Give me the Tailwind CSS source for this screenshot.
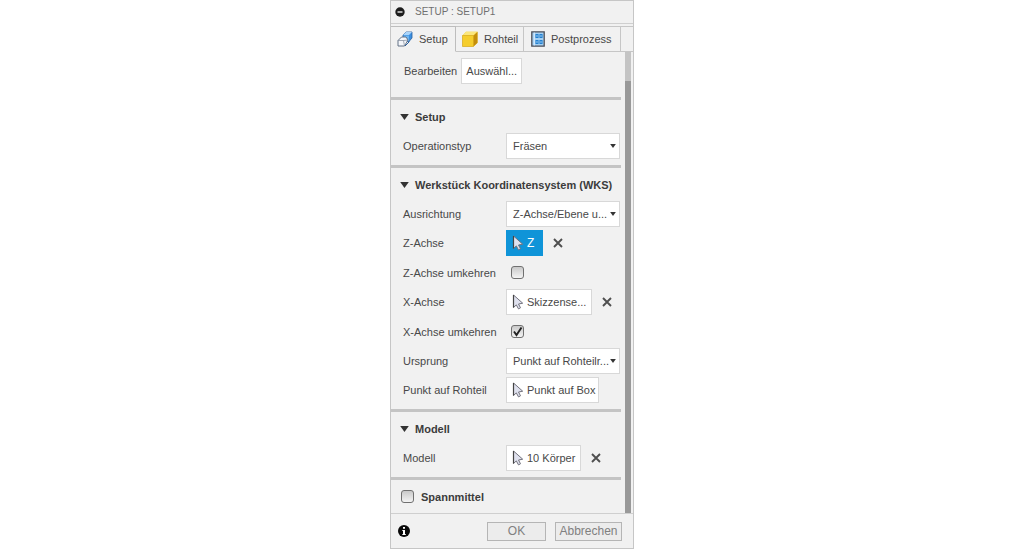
<!DOCTYPE html>
<html lang="de">
<head>
<meta charset="utf-8">
<meta name="viewport" content="width=device-width, initial-scale=1">
<title>Setup : Setup1</title>
<script src="https://cdn.jsdelivr.net/npm/@tailwindcss/browser@4"></script>
</head>
<body class="bg-white font-['Liberation_Sans',Arial,sans-serif] text-[11px] leading-4 text-[#484848]">
<svg class="hidden" aria-hidden="true">
  <symbol id="cursor" viewBox="0 0 12 16"><path d="M1.500 1v12.500l2.800-2.600 2.200 4 2-1.100-2-3.800 4.200-.8z" fill="#dfe1ee" stroke="#73737e" stroke-width="1"/><path d="M1.500 1v12.500" stroke="#444" stroke-width="1.200"/></symbol>
  <symbol id="close" viewBox="0 0 10 10"><path d="M1 1l8 8M9 1l-8 8" stroke="#4f4f4f" stroke-width="1.900" fill="none"/></symbol>
  <symbol id="down" viewBox="0 0 10 7"><path d="M0 0h10L5 7z" fill="#333"/></symbol>
</svg>
<main class="mx-auto flex min-h-screen w-full max-w-[244px] flex-col border border-[#c6c6c6] bg-[#f1f1f1]">
  <header class="flex h-[23px] items-center gap-2.5 border-b border-[#cfcfcf] pl-1">
    <svg class="size-[10px]" viewBox="0 0 10 10"><circle cx="5" cy="5" r="4.700" fill="#1d1d1d"/><path d="M2.500 5h5" stroke="#ddd" stroke-width="1.500"/></svg>
    <h1 class="text-[10px] text-[#707070]">SETUP : SETUP1</h1>
  </header>

  <nav class="flex h-7 items-stretch pt-0.5" role="tablist">
    <button role="tab" aria-selected="true" class="flex w-[65px] items-center gap-1.5 border-t border-r border-b border-[#bdbdbd] border-b-transparent pl-1.5">
      <svg class="size-4 shrink-0" viewBox="0 0 16 16"><path d="M6 4l3-3h6v6l-3 3.500H6z" fill="#3b8fe0" stroke="#2b5f9e" stroke-width=".8"/><path d="M6 4l3-3h6l-3 3z" fill="#a9d4fa"/><path d="M6.500 4.500H12V10H6.500z" fill="#6db5f2"/><path d="M1 9.500L4.500 6H9l2 3-3.500 6H1z" fill="#f4f6fa" stroke="#55657c" stroke-width=".9"/><path d="M1 9.500h5.500L11 9M6.500 9.500l1 5.500" stroke="#7d8796" stroke-width=".7" fill="none"/><path d="M8 15l4.500-4.500" stroke="#2b5f9e"/></svg>
      Setup
    </button>
    <button role="tab" aria-selected="false" class="flex w-[68px] items-center gap-1.5 border-t border-r border-b border-[#c6c6c6] pl-1.5">
      <svg class="size-4 shrink-0" viewBox="0 0 16 16"><path d="M.5 4.500L4 .8h11.500v11L11.500 15.500H.5z" fill="#f5cd2c"/><path d="M.5 4.500L4 .8h11.500l-4 3.700z" fill="#fbe67c"/><path d="M11.500 4.500l4-3.700v11l-4 3.700z" fill="#c48e0c"/><path d="M.5 4.500h11v11H.5z" fill="none" stroke="#d6a818" stroke-width=".7"/></svg>
      Rohteil
    </button>
    <button role="tab" aria-selected="false" class="flex w-[97px] items-center gap-1.5 border-t border-r border-b border-[#c6c6c6] pl-[7px]">
      <svg class="h-4 w-[14px] shrink-0" viewBox="0 0 14 16"><path d="M.8.8h12.400v14.400H.8z" fill="#a5d0f3" stroke="#4c4f58" stroke-width="1.300"/><path d="M3.300 1.500v13" stroke="#e7f4ff" stroke-width=".8"/><path d="M5 3.500h2v3H5zM9 3.500h2v3H9zM5 9.500h2v3H5zM9 9.500h2v3H9z" fill="none" stroke="#2480cf" stroke-width="1.100"/></svg>
      Postprozess
    </button>
    <span class="flex-1 border-t border-b border-[#c6c6c6]"></span>
  </nav>

  <div class="flex flex-1">
    <form id="setup" class="min-w-0 flex-1">
      <div class="flex h-[45px] items-start gap-1 pt-1.5 pl-[13px]">
        <label for="edit" class="leading-[26px]">Bearbeiten</label>
        <button id="edit" type="button" class="h-[26px] w-[61px] border border-[#d8d8d8] bg-white">Auswähl...</button>
      </div>

      <section class="border-t-3 border-[#c4c4c4] pb-1.5">
        <h2 class="flex h-[33px] items-center gap-1.5 pl-[9px] font-bold text-[#3c3c3c]"><svg class="h-1.5 w-[9px]"><use href="#down"/></svg>Setup</h2>
        <div class="flex h-[26px] items-center pl-3">
          <label for="op" class="w-[103px]">Operationstyp</label>
          <div class="relative w-[114px]"><select id="op" class="h-[26px] w-full appearance-none border border-[#d8d8d8] bg-white pl-1.5"><option>Fräsen</option></select><svg class="pointer-events-none absolute top-[11px] right-1 h-1 w-1.5"><use href="#down"/></svg></div>
        </div>
      </section>

      <section class="border-t-3 border-[#c4c4c4] pb-1.5">
        <h2 class="flex h-[33px] items-center gap-1.5 pl-[9px] font-bold whitespace-nowrap text-[#3c3c3c]"><svg class="h-1.5 w-[9px] shrink-0"><use href="#down"/></svg>Werkstück Koordinatensystem (WKS)</h2>
        <div class="flex flex-col gap-[3px] pl-3">
          <div class="flex h-[26px] items-center">
            <label for="orient" class="w-[103px]">Ausrichtung</label>
            <div class="relative w-[114px]"><select id="orient" class="h-[26px] w-full appearance-none border border-[#d8d8d8] bg-white pl-1.5"><option>Z-Achse/Ebene u...</option></select><svg class="pointer-events-none absolute top-[11px] right-1 h-1 w-1.5"><use href="#down"/></svg></div>
          </div>
          <div class="flex h-[26px] items-center">
            <label for="zaxis" class="w-[103px]">Z-Achse</label>
            <button id="zaxis" type="button" class="flex h-[26px] w-[37px] items-center gap-[3px] bg-[#0f94d8] pl-1.5 text-xs text-white"><svg class="h-4 w-3"><use href="#cursor"/></svg>Z</button>
            <button type="button" aria-label="Z-Achse löschen" class="ml-2.5"><svg class="size-[10px]"><use href="#close"/></svg></button>
          </div>
          <div class="flex h-[27px] items-center">
            <label for="zflip" class="w-[103px]">Z-Achse umkehren</label>
            <input id="zflip" type="checkbox" class="ml-[5px] size-[13px] appearance-none rounded-[3px] border border-[#707070] bg-linear-to-b from-[#c9c9c9] to-[#f4f4f4]">
          </div>
          <div class="flex h-[26px] items-center">
            <label for="xaxis" class="w-[103px]">X-Achse</label>
            <button id="xaxis" type="button" class="flex h-[26px] w-[86px] items-center gap-[3px] border border-[#d8d8d8] bg-white pl-[5px]"><svg class="h-4 w-3"><use href="#cursor"/></svg>Skizzense...</button>
            <button type="button" aria-label="X-Achse löschen" class="ml-2.5"><svg class="size-[10px]"><use href="#close"/></svg></button>
          </div>
          <div class="flex h-[27px] items-center">
            <label for="xflip" class="w-[103px]">X-Achse umkehren</label>
            <div class="relative ml-[5px] size-[13px]"><input id="xflip" type="checkbox" checked class="peer block size-[13px] appearance-none rounded-[3px] border border-[#707070] bg-linear-to-b from-[#c9c9c9] to-[#f4f4f4]"><svg class="pointer-events-none absolute inset-0 hidden size-[13px] peer-checked:block" viewBox="0 0 13 13"><path d="M3 6.500l2.500 3.500L10.500 2.500" fill="none" stroke="#222" stroke-width="1.900"/></svg></div>
          </div>
          <div class="flex h-[26px] items-center">
            <label for="origin" class="w-[103px]">Ursprung</label>
            <div class="relative w-[114px]"><select id="origin" class="h-[26px] w-full appearance-none border border-[#d8d8d8] bg-white pl-1.5"><option>Punkt auf Rohteilr...</option></select><svg class="pointer-events-none absolute top-[11px] right-1 h-1 w-1.5"><use href="#down"/></svg></div>
          </div>
          <div class="flex h-[26px] items-center">
            <label for="point" class="w-[103px]">Punkt auf Rohteil</label>
            <button id="point" type="button" class="flex h-[26px] w-[93px] items-center gap-[3px] border border-[#d8d8d8] bg-white pl-[5px]"><svg class="h-4 w-3"><use href="#cursor"/></svg>Punkt auf Box</button>
          </div>
        </div>
      </section>

      <section class="border-t-3 border-[#c4c4c4] pb-1.5">
        <h2 class="flex h-[33px] items-center gap-1.5 pl-[9px] font-bold text-[#3c3c3c]"><svg class="h-1.5 w-[9px]"><use href="#down"/></svg>Modell</h2>
        <div class="flex h-[26px] items-center pl-3">
          <label for="model" class="w-[103px]">Modell</label>
          <button id="model" type="button" class="flex h-[26px] w-[75px] items-center gap-[3px] border border-[#d8d8d8] bg-white pl-[5px]"><svg class="h-4 w-3"><use href="#cursor"/></svg>10 Körper</button>
          <button type="button" aria-label="Modell löschen" class="ml-2.5"><svg class="size-[10px]"><use href="#close"/></svg></button>
        </div>
      </section>

      <section class="flex h-9 items-center border-t-3 border-[#c4c4c4] pl-2.5">
        <input id="fixture" type="checkbox" class="size-[13px] appearance-none rounded-[3px] border border-[#707070] bg-linear-to-b from-[#c9c9c9] to-[#f4f4f4]">
        <label for="fixture" class="ml-[7px] font-bold text-[#3c3c3c]">Spannmittel</label>
      </section>
    </form>
    <div class="mr-0.5 ml-1 flex w-1.5 flex-col bg-[#c4c4c4] pt-[29px]"><span class="flex-1 bg-[#999999]"></span></div>
  </div>

  <footer class="flex h-[35px] items-center border-t border-[#cfcfcf] pr-[11px] pl-[7px] text-xs text-[#808080]">
    <button type="button" aria-label="Info"><svg class="size-3" viewBox="0 0 12 12"><circle cx="6" cy="6" r="6" fill="#080808"/><path d="M5 2h2v1.700H5zM4.300 5H7v4h.8v1H4.300V9H5V6h-.7z" fill="#fff"/></svg></button>
    <button type="submit" form="setup" class="ml-auto h-[19px] w-[59px] border border-[#b5b5b5] bg-[#ececec]">OK</button>
    <button type="button" class="ml-[9px] h-[19px] w-[67px] border border-[#b5b5b5] bg-[#ececec]">Abbrechen</button>
  </footer>
</main>
</body>
</html>
